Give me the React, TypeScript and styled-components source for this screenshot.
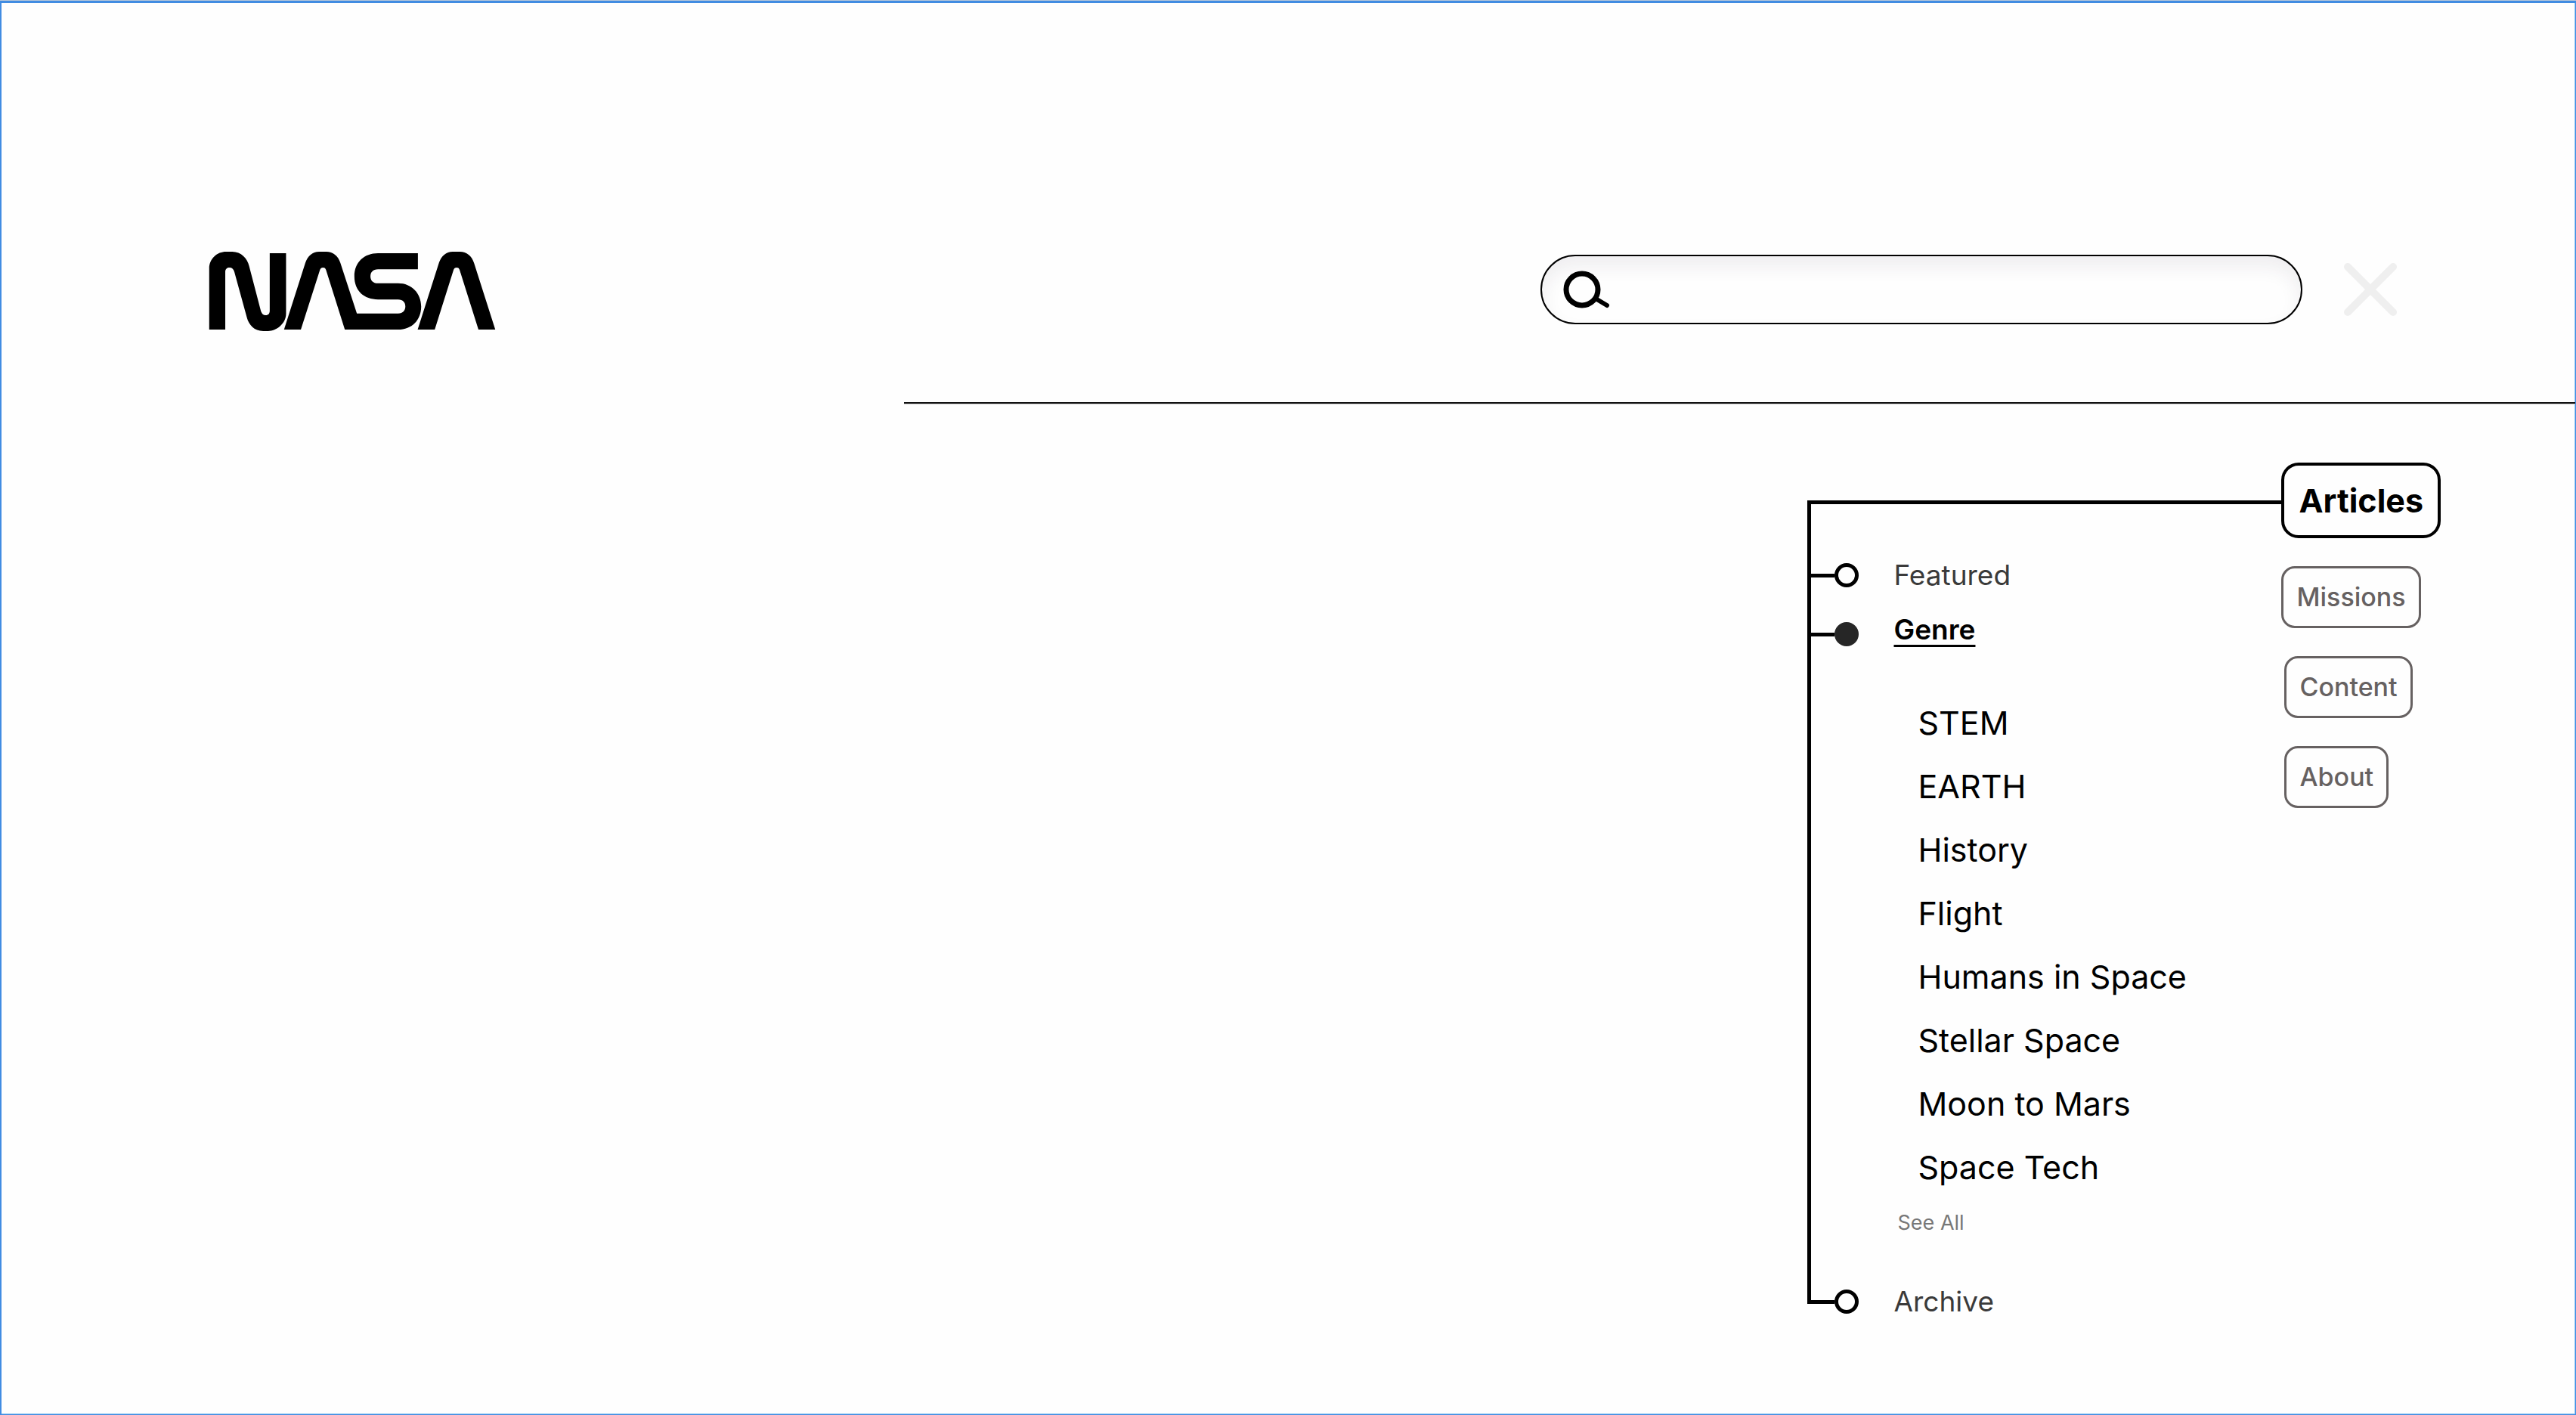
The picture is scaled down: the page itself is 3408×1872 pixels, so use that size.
import React from "react";
import styled, { createGlobalStyle, css } from "styled-components";

const GlobalStyle = createGlobalStyle`
  *, *::before, *::after {
    box-sizing: border-box;
  }
  body {
    margin: 0;
    border-top: 1px solid #b8c8da;
    background: #fefefe;
    font-family: Inter, "Liberation Sans", sans-serif;
    color: #000;
  }
  ul {
    list-style: none;
    margin: 0;
    padding: 0;
  }
  a {
    color: inherit;
    text-decoration: none;
  }
`;

const Frame = styled.div`
  min-height: calc(100vh - 1px);
  border: solid #418ce2;
  border-width: 3px 1px 1px 2px;
  box-shadow: inset -1px -1px 0 #8cc4f0;
`;

const Header = styled.header`
  display: flex;
  align-items: center;
  padding: 324px 235px 94px 274px;
`;

const LogoLink = styled.a`
  display: block;
  margin-right: auto;
  padding-top: 5px;

  svg {
    display: block;
    width: 380px;
    height: 105px;
  }
`;

const SearchBox = styled.label`
  display: flex;
  align-items: center;
  gap: 24px;
  width: 1008px;
  height: 92px;
  padding: 0 28px 0 27px;
  border: 2px solid #000;
  border-radius: 46px;
  background: #fefefe;
  box-shadow: inset 0 14px 24px rgba(40, 30, 60, 0.07);

  svg {
    flex: none;
    display: block;
  }
`;

const SearchInput = styled.input`
  flex: 1;
  min-width: 0;
  border: 0;
  outline: 0;
  background: transparent;
  font: inherit;
  font-size: 37px;
`;

const CloseButton = styled.button`
  margin-left: 54px;
  padding: 0;
  border: 0;
  background: none;

  svg {
    display: block;
  }
`;

const Rule = styled.hr`
  height: 2px;
  margin: 0 0 0 1194px;
  border: 0;
  background: #111;
  box-shadow: 0 1px 0 #ccc;
`;

const Menu = styled.nav`
  display: flex;
  justify-content: flex-end;
  align-items: flex-start;
  padding: 78px 178px 0 0;
`;

const Tree = styled.ul`
  display: flex;
  flex-direction: column;
  gap: 30px;
  width: 627px;
  && {
    margin-top: 50px;
    padding-top: 73px;
  }
  border-top: 5px solid #000;
  border-left: 5px solid #000;
`;

const TreeItem = styled.li`
  &:last-child {
    margin-top: 36px;
    margin-bottom: -18px;
  }
`;

const Node = styled.div`
  display: flex;
  align-items: center;
  font-size: 37px;
  line-height: 42px;
`;

const Connector = styled.span`
  width: 31px;
  height: 5px;
  background: #000;
`;

const Dot = styled.span<{ $active?: boolean }>`
  width: 32px;
  height: 32px;
  margin-right: 46px;
  border: 5px solid ${(p) => (p.$active ? "#262626" : "#000")};
  border-radius: 50%;
  background: ${(p) => (p.$active ? "#262626" : "transparent")};
`;

const NodeLink = styled.a<{ $active?: boolean }>`
  color: #3a3a3a;
  ${(p) =>
    p.$active &&
    css`
      padding-bottom: 12px;
      color: #000;
      font-weight: 600;
      text-decoration: underline;
      text-decoration-thickness: 3px;
      text-underline-offset: 7px;
      text-decoration-skip-ink: none;
    `}
`;

const GenreList = styled.ul`
  && {
    margin-top: 48px;
    padding-left: 141px;
  }
  font-size: 43px;
  line-height: 84px;
`;

const SeeAll = styled.a`
  display: block;
  width: max-content;
  margin: 15px 0 0 114px;
  color: #777;
  font-size: 27px;
  line-height: 34px;
`;

const Tabs = styled.div`
  display: flex;
  flex-direction: column;
  align-items: flex-start;
  gap: 37px;
`;

const SubTabs = styled(Tabs)`
  padding-left: 4px;
`;

const Tab = styled.button<{ $active?: boolean }>`
  height: 82px;
  padding: 0 17px;
  border: 3px solid #666161;
  border-radius: 18px;
  background: #fefefe;
  color: #666161;
  font: inherit;
  font-size: 34px;
  font-weight: 500;
  line-height: 42px;
  ${(p) =>
    p.$active &&
    css`
      height: 100px;
      padding: 0 19px;
      border: 4px solid #000;
      border-radius: 23px;
      color: #000;
      font-size: 43px;
      font-weight: 700;
    `}
`;

const genres = [
  "STEM",
  "EARTH",
  "History",
  "Flight",
  "Humans in Space",
  "Stellar Space",
  "Moon to Mars",
  "Space Tech",
];

function Logo() {
  return (
    <svg viewBox="78 68 1139 316" role="img" aria-label="NASA">
      <path d="M78 378V135C78 95 110 68 145 68H170C205 68 230 95 237 125L284 305C288 316 293 321 303 321C313 321 319 315 319 303V74H384V315C384 355 345 384 313 384H293C258 384 236 360 228 330L178 148C175 137 169 131 159 131C149 131 142 137 142 148V378Z" />
      <path d="M376 378L461 112C470 85 490 68 515 68H545C570 68 592 85 600 112L666 314H830C850 314 859 300 859 286C859 270 850 258 830 258H750C695 258 656 225 656 166C656 110 695 74 750 74H909V138H750C730 138 720 150 720 166C720 183 730 194 750 194H830C885 194 922 235 922 286C922 340 885 378 830 378H618L543 140C540 133 537 131 531 131C525 131 521 134 519 140L443 378Z" />
      <path d="M908 378L993 112C1002 85 1022 68 1047 68H1077C1102 68 1124 85 1132 112L1217 378H1150L1075 140C1072 133 1069 131 1063 131C1057 131 1053 134 1051 140L976 378Z" />
    </svg>
  );
}

function TreeNode({ label, active }: { label: string; active?: boolean }) {
  return (
    <Node>
      <Connector />
      <Dot $active={active} />
      <NodeLink href="#" $active={active}>
        {label}
      </NodeLink>
    </Node>
  );
}

export default function App() {
  return (
    <>
      <GlobalStyle />
      <Frame>
        <Header>
          <LogoLink href="#">
            <Logo />
          </LogoLink>
          <SearchBox>
            <svg width="64" height="50" viewBox="0 0 64 50" fill="none" stroke="#000" aria-hidden="true">
              <circle cx="26" cy="25" r="21" strokeWidth="7" />
              <path d="M44 37L59 46" strokeWidth="6" strokeLinecap="round" />
            </svg>
            <SearchInput type="search" aria-label="Search" />
          </SearchBox>
          <CloseButton type="button" aria-label="Close">
            <svg width="72" height="72" viewBox="0 0 72 72" fill="none" stroke="#efefef" strokeWidth="10" strokeLinecap="round">
              <path d="M6 6L66 66M66 6L6 66" />
            </svg>
          </CloseButton>
        </Header>
        <Rule />
        <Menu>
          <Tree>
            <TreeItem>
              <TreeNode label="Featured" />
            </TreeItem>
            <TreeItem>
              <TreeNode label="Genre" active />
              <GenreList>
                {genres.map((genre) => (
                  <li key={genre}>
                    <a href="#">{genre}</a>
                  </li>
                ))}
              </GenreList>
              <SeeAll href="#">See All</SeeAll>
            </TreeItem>
            <TreeItem>
              <TreeNode label="Archive" />
            </TreeItem>
          </Tree>
          <Tabs>
            <Tab type="button" $active>
              Articles
            </Tab>
            <Tab type="button">Missions</Tab>
            <SubTabs>
              <Tab type="button">Content</Tab>
              <Tab type="button">About</Tab>
            </SubTabs>
          </Tabs>
        </Menu>
      </Frame>
    </>
  );
}
